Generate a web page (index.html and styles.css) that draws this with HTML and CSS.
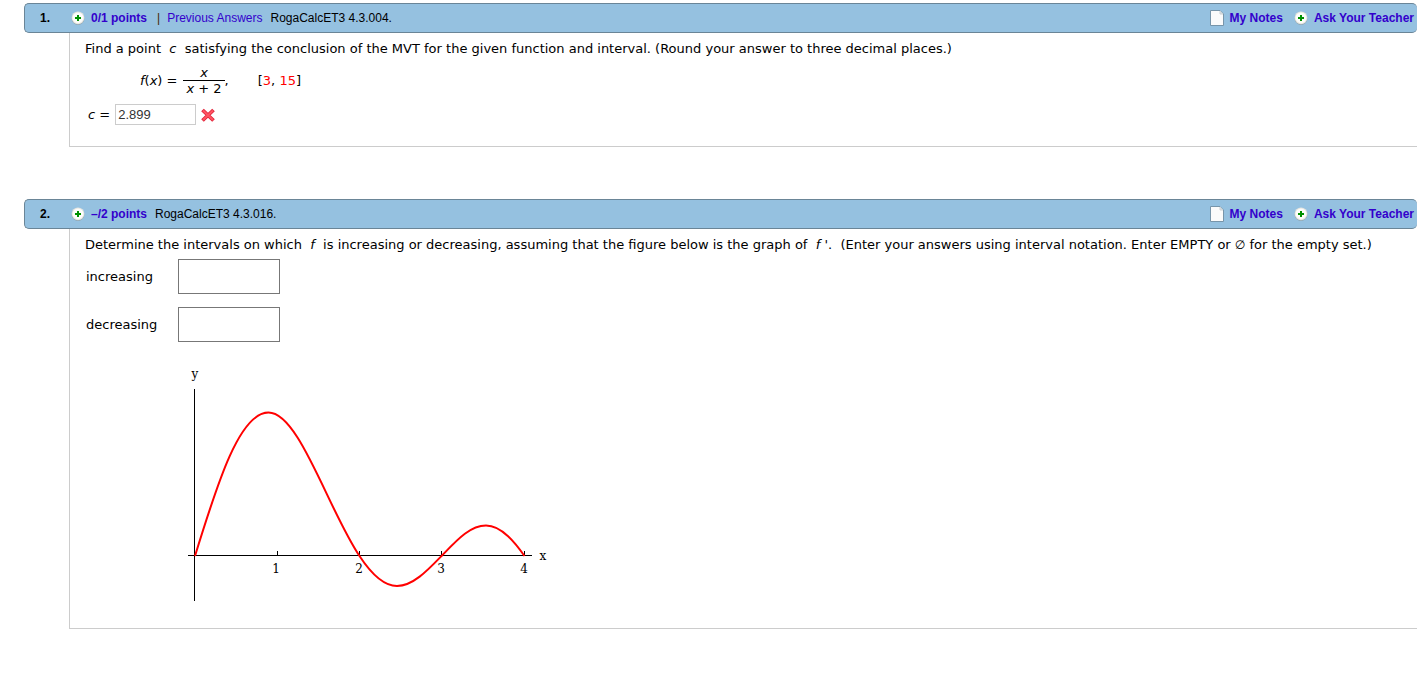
FILE: index.html
```
<!DOCTYPE html>
<html lang="en">
<head>
    <meta charset="UTF-8">
    <meta name="viewport" content="width=device-width, initial-scale=1.0">
    <title>RogaCalcET3 4.3</title>
    <link rel="stylesheet" href="styles.css">
</head>
<body>
    <!-- shared icons -->
    <svg class="defs" aria-hidden="true">
        <symbol id="plus" viewBox="0 0 14 14">
            <circle cx="7" cy="7.5" r="6.4" fill="#8fa5b0"/>
            <circle cx="7" cy="6.8" r="6.4" fill="#e6e6e0"/>
            <circle cx="7" cy="6.8" r="5.4" fill="#fdfdfb"/>
            <path d="M7 4v6M4 7h6" stroke="#009000" stroke-width="2"/>
        </symbol>
        <symbol id="note" viewBox="0 0 14 16">
            <path d="M.5.5h9.500l3.500 3.500v11.500H.5z" fill="#fbfbfb" stroke="#7795aa"/>
            <path d="M10 1v3h3" fill="#e2e2e2" stroke="#c9cfd3"/>
        </symbol>
    </svg>

    <section class="question">
        <header class="bar">
            <b class="number">1.</b>
            <svg class="plus"><use href="#plus"/></svg>
            <a href="#" class="points">0/1 points</a>
            <span class="divider">|</span>
            <a href="#" class="previous">Previous Answers</a>
            <span class="source">RogaCalcET3 4.3.004.</span>
            <nav class="tools">
                <a href="#"><svg class="note"><use href="#note"/></svg>My Notes</a>
                <a href="#"><svg class="plus"><use href="#plus"/></svg>Ask Your Teacher</a>
            </nav>
        </header>
        <div class="content">
            <p>Find a point &nbsp;<i>c</i>&nbsp; satisfying the conclusion of the MVT for the given function and interval. (Round your answer to three decimal places.)</p>
            <div class="formula">
                <span><i>f</i>(<i>x</i>) =</span>
                <span class="fraction">
                    <span class="top"><i>x</i></span>
                    <span><i>x</i> + 2</span>
                </span>
                <span class="comma">,</span>
                <span>[<span class="red">3</span>, <span class="red">15</span>]</span>
            </div>
            <div class="answer">
                <label for="c"><i>c</i> =</label>
                <input type="text" id="c" value="2.899">
                <svg class="wrong" viewBox="0 0 14 14" role="img" aria-label="Incorrect">
                    <path d="M1.500 2l11 10.500M12.500 2l-11 10.500" stroke="#e0243a" stroke-width="3.800"/>
                    <path d="M2 2.500l10 9.500M12 2.500l-10 9.500" stroke="#ff5361" stroke-width="2"/>
                </svg>
            </div>
        </div>
    </section>

    <section class="question">
        <header class="bar">
            <b class="number">2.</b>
            <svg class="plus"><use href="#plus"/></svg>
            <a href="#" class="points">–/2 points</a>
            <span class="source">RogaCalcET3 4.3.016.</span>
            <nav class="tools">
                <a href="#"><svg class="note"><use href="#note"/></svg>My Notes</a>
                <a href="#"><svg class="plus"><use href="#plus"/></svg>Ask Your Teacher</a>
            </nav>
        </header>
        <div class="content">
            <p>Determine the intervals on which &nbsp;<i>f</i>&nbsp; is increasing or decreasing, assuming that the figure below is the graph of &nbsp;<i>f</i> '.&nbsp; (Enter your answers using interval notation. Enter EMPTY or <span class="empty">∅</span> for the empty set.)</p>
            <div class="intervals">
                <label for="increasing">increasing</label>
                <input type="text" id="increasing">
                <label for="decreasing">decreasing</label>
                <input type="text" id="decreasing">
            </div>
            <svg class="graph" viewBox="0 0 380 247" role="img" aria-label="Graph of f prime">
                <path class="axis" d="M14.500 29v212M8 195.500h344M97.500 191v4M179.500 191v4M261.500 191v4M344.500 191v4"/>
                <path class="curve" d="M15 196C38 121 60 52.500 88.500 52.500C119 52.500 148 149 179.500 196C192 215 204 226 217 226C233 226 248 210 262 195.500C277 180 290 165.500 306 165.500C322 165.500 336 184 344.500 196"/>
                <text x="15" y="18">y</text>
                <text x="363" y="200">x</text>
                <text x="96" y="213">1</text>
                <text x="179" y="213">2</text>
                <text x="261" y="213">3</text>
                <text x="344" y="213">4</text>
            </svg>
        </div>
    </section>
</body>
</html>
```
FILE: styles.css
```
body {
    margin: 3px 0 0 24px;
    background: #fff;
    color: #000;
    font-family: Verdana, "DejaVu Sans", sans-serif;
    font-size: 13px;
    line-height: 16px;
}
.defs {
    display: none;
}
svg {
    flex: none;
}
.question {
    margin-bottom: 52px;
}
.bar {
    box-sizing: border-box;
    display: flex;
    align-items: center;
    height: 30px;
    padding: 0 3px 0 15px;
    border: 1px solid #6a8597;
    border-right: 0;
    border-radius: 5px;
    background: #95c1e0;
    font-family: "Liberation Sans", Arial, sans-serif;
    font-size: 12px;
    white-space: nowrap;
}
.bar a {
    color: #3300cc;
    text-decoration: none;
}
.number {
    width: 31px;
}
.plus {
    width: 14px;
    height: 14px;
}
.points {
    margin-left: 6px;
    font-weight: bold;
}
.divider {
    margin: 0 7px 0 10px;
    color: #431f00;
}
.source {
    margin-left: 8px;
}
.tools {
    display: flex;
    gap: 11px;
    margin-left: auto;
    font-weight: bold;
}
.tools a {
    display: flex;
    align-items: center;
    gap: 6px;
}
.note {
    width: 14px;
    height: 16px;
}
.content {
    margin-left: 45px;
    padding: 8px 0 21px 15px;
    border: 1px solid #ccc;
    border-width: 0 0 1px 1px;
}
p {
    margin: 0;
}
.formula {
    display: flex;
    align-items: center;
    margin: 8px 0 8px 55px;
    line-height: 15px;
}
.fraction {
    display: flex;
    flex-direction: column;
    margin-left: 6px;
    text-align: center;
}
.fraction span {
    padding: 0 3px;
}
.fraction .top {
    border-bottom: 1px solid #000;
}
.comma {
    margin-right: 29px;
}
.red {
    color: #f00;
}
.answer {
    display: flex;
    align-items: center;
    margin-left: 3px;
}
input {
    box-sizing: border-box;
    border: 1px solid #777;
    font-family: "Liberation Sans", Arial, sans-serif;
    font-size: 13px;
}
.answer input {
    width: 81px;
    height: 21px;
    margin: 0 5px;
    padding: 0 2px;
    border-color: #ccc;
    color: #333;
}
.wrong {
    width: 14px;
    height: 14px;
}
.empty {
    font-size: 12px;
    font-style: italic;
}
.intervals {
    display: grid;
    grid-template-columns: 92px 102px;
    align-items: center;
    row-gap: 13px;
    margin: 6px 0 18px 1px;
}
.intervals input {
    height: 35px;
}
.graph {
    display: block;
    width: 380px;
    height: 247px;
    margin-left: 95px;
}
.axis {
    fill: none;
    stroke: #000;
}
.curve {
    fill: none;
    stroke: #f00;
    stroke-width: 2;
}
.graph text {
    font-family: "DejaVu Serif", serif;
    font-size: 12px;
    text-anchor: middle;
}
```
